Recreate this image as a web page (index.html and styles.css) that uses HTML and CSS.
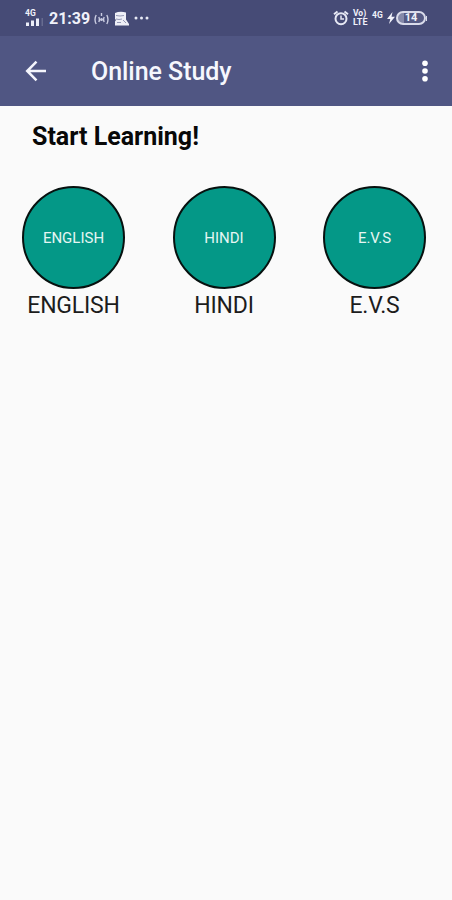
FILE: index.html
```html
<!DOCTYPE html>
<html lang="en">
<head>
<meta charset="utf-8">
<title>Online Study</title>
<link rel="stylesheet" href="styles.css">
</head>
<body>
<header>
  <div class="status">
    <div class="signal">
      <span class="net">4G</span>
      <svg width="18" height="8" viewBox="0 0 18 8" fill="#eceef8"><path d="M1 4.500h3V8H1zM6 2.500h3V8H6zM11 .5h3V8h-3z"/><path d="M16.500 0H18v8h-1.500z" opacity=".2"/></svg>
    </div>
    <span class="time">21:39</span>
    <svg class="cast" width="15" height="14" viewBox="0 0 15 14" fill="none" stroke="#c9cce1" stroke-width="1.400"><path d="M2.200 3Q-.2 7.500 2.200 12M4.800 5Q6 7.500 4.800 10M12.800 3Q15.200 7.500 12.800 12M10.200 5Q9 7.500 10.200 10M7.500 1v3"/><circle cx="7.500" cy="7.500" r=".8" fill="#c9cce1"/></svg>
    <svg class="app" width="15" height="15" viewBox="0 0 15 15"><path d="M1 2Q6 0 12 1.500V8.500L15 13V14.500H1V10.500L2 9L1 8Z" fill="#eeeff7"/><path d="M2 4.500Q6 5.500 10 4.500M2 8Q5 9 8 8M3 11.500H7M9 9L12 12" fill="none" stroke="#9498b4"/></svg>
    <svg class="dots" width="15" height="4" viewBox="0 0 15 4" fill="#e8eaf5"><circle cx="2" cy="2" r="1.500"/><circle cx="7.500" cy="2" r="1.500"/><circle cx="13" cy="2" r="1.500"/></svg>
    <span class="spacer"></span>
    <svg class="alarm" width="16" height="16" viewBox="0 0 16 16" fill="none" stroke="#e6e8f4" stroke-width="2"><circle cx="8" cy="8.700" r="5.500"/><path d="M8 5.500V9h3" stroke-width="1.500"/><path d="M1 4.200L4.500 1.500M15 4.200L11.500 1.500"/></svg>
    <div class="volte"><span>Vo)</span><span>LTE</span></div>
    <span class="net second">4G</span>
    <svg class="bolt" width="8" height="12" viewBox="0 0 8 12" fill="#f0f1fa"><path d="M5.500 0L0 7H3.300L2 12L8 4.700H4.500Z"/></svg>
    <div class="battery"><span>14</span></div>
    <span class="nub"></span>
  </div>
  <div class="appbar">
    <svg class="back" width="22" height="22" viewBox="0 0 22 22" fill="none" stroke="#f4f5fc" stroke-width="2.500"><path d="M21 11H2.500M11.500 1.700L2.200 11L11.500 20.300"/></svg>
    <h1>Online Study</h1>
    <svg class="more" width="6" height="22" viewBox="0 0 6 22" fill="#fff"><circle cx="3" cy="3.300" r="2.800"/><circle cx="3" cy="11" r="2.800"/><circle cx="3" cy="18.700" r="2.800"/></svg>
  </div>
</header>
<main>
  <h2>Start Learning!</h2>
  <div class="subjects">
    <div class="subject"><div class="circle">ENGLISH</div><span class="label">ENGLISH</span></div>
    <div class="subject"><div class="circle">HINDI</div><span class="label">HINDI</span></div>
    <div class="subject"><div class="circle">E.V.S</div><span class="label">E.V.S</span></div>
  </div>
</main>
</body>
</html>
```
FILE: styles.css
```css
* { box-sizing: border-box; }
body { margin: 0; min-height: 900px; background: #fafafa; font-family: Roboto, "Liberation Sans", sans-serif; color: #080808; overflow: hidden; }
svg { display: block; flex: none; }
.status { height: 36px; background: #464b76; display: flex; align-items: center; padding: 0 25px; color: #f0f1fa; }
.signal { width: 18px; height: 16px; margin-right: 6px; display: flex; flex-direction: column; justify-content: space-between; }
.net { font-size: 8.5px; line-height: 7px; font-weight: 700; }
.time { width: 42px; font-size: 16px; line-height: 20px; font-weight: 700; margin-top: 2px; }
.cast { margin: 1px 0 0 3px; }
.app { margin: 0 0 0 5px; }
.dots { margin-left: 5px; }
.spacer { flex: 1; }
.volte { width: 17px; margin: -1px 0 0 4px; display: flex; flex-direction: column; font-size: 8.5px; line-height: 10px; font-weight: 700; }
.volte span + span { margin-top: -1px; font-size: 9px; }
.second { width: 13px; margin: 0 0 6px 2px; }
.bolt { margin: 0 1px 0 2px; }
.battery { width: 30px; height: 14px; border: 2px solid #d9dbea; border-radius: 7px; display: flex; align-items: center; justify-content: center; background: linear-gradient(90deg, #8589a9 22%, #555a84 22%); font-size: 11px; line-height: 10px; font-weight: 700; }
.nub { width: 1px; height: 5px; background: #d9dbea; }
.appbar { height: 70px; background: #505683; display: flex; align-items: center; padding: 0 24px 0 25px; color: #f6f7fd; }
.appbar h1 { margin: 2px auto 0 44px; font-size: 25px; line-height: 30px; font-weight: 500; letter-spacing: -.05px; white-space: nowrap; }
main { padding: 16px 0 0; }
main h2 { margin: 0 0 0 32px; font-size: 25px; line-height: 30px; font-weight: 700; }
.subjects { display: grid; grid-template-columns: repeat(3, 103px); column-gap: 47.5px; padding: 34px 0 0 22px; }
.subject { display: flex; flex-direction: column; align-items: center; }
.circle { width: 103px; height: 103px; border: 2px solid #07110f; border-radius: 50%; background: #049887; color: #e5f6f3; font-size: 15px; display: flex; align-items: center; justify-content: center; }
.label { font-size: 23px; line-height: 28px; margin-top: 3px; color: #1c1c1c; font-weight: 400; letter-spacing: -.2px; }
```
